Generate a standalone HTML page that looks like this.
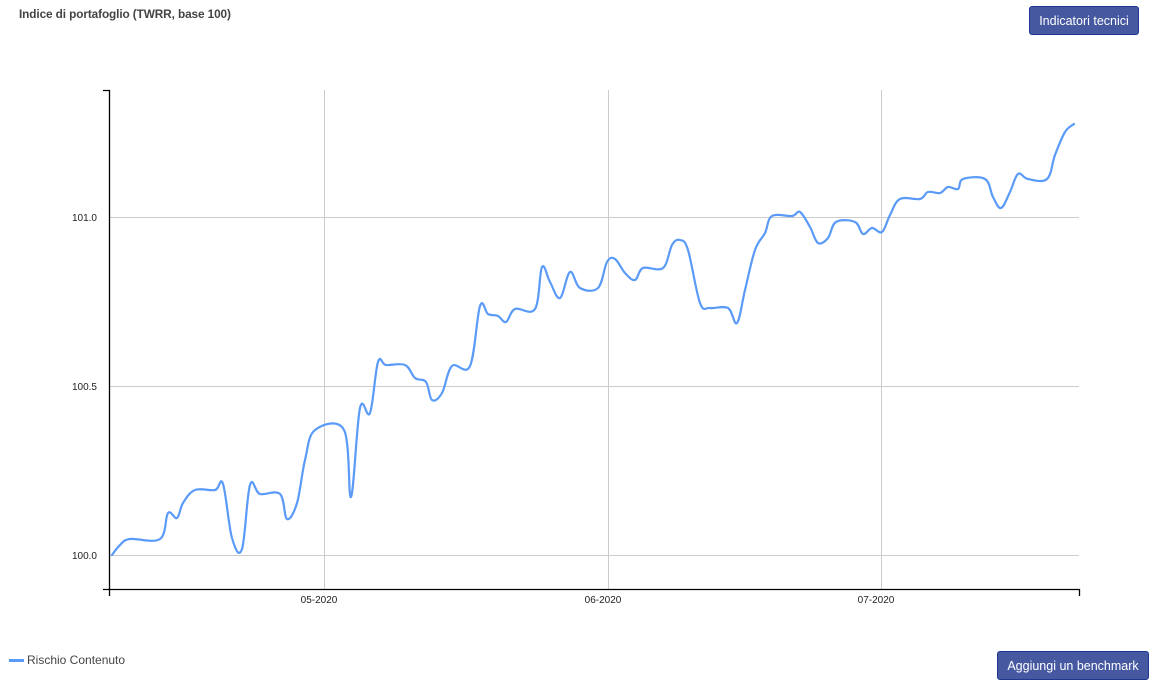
<!DOCTYPE html>
<html><head><meta charset="utf-8"><style>
body{margin:0;width:1154px;height:684px;background:#fff;font-family:"Liberation Sans",Arial,sans-serif;position:relative;overflow:hidden}
.t{position:absolute;left:19px;top:7px;font-size:11.8px;font-weight:bold;color:#444;letter-spacing:-0.1px}
.btn{position:absolute;background:#4558a0;border:1px solid #1f3790;border-radius:3px;color:#fff;font-size:12.5px;display:flex;align-items:center;justify-content:center;box-sizing:border-box}
.lg{position:absolute;left:9px;top:653px;font-size:12px;color:#444}
.lg i{display:inline-block;width:15px;height:3px;background:#5b9bf8;vertical-align:middle;margin-right:3px}
svg{position:absolute;left:0;top:0}
text{font-family:"Liberation Sans",Arial,sans-serif;font-size:10px;fill:#222}
</style></head><body>
<div class="t">Indice di portafoglio (TWRR, base 100)</div>
<div class="btn" style="left:1029px;top:6px;width:110px;height:29px">Indicatori tecnici</div>
<div class="btn" style="left:997px;top:651px;width:152px;height:29px">Aggiungi un benchmark</div>
<div class="lg"><i></i>Rischio Contenuto</div>
<svg width="1154" height="684">
<g stroke="#ccc" stroke-width="1">
<line x1="109" y1="217.5" x2="1079" y2="217.5"/>
<line x1="109" y1="386.5" x2="1079" y2="386.5"/>
<line x1="109" y1="555.5" x2="1079" y2="555.5"/>
<line x1="324.5" y1="90" x2="324.5" y2="589"/>
<line x1="608.5" y1="90" x2="608.5" y2="589"/>
<line x1="881.5" y1="90" x2="881.5" y2="589"/>
</g>
<g stroke="#000" stroke-width="1.3" fill="none">
<path d="M103 90.5H109.5V589"/>
<path d="M103 589.5H1079.5V596"/>
<line x1="109.5" y1="589" x2="109.5" y2="596"/>
</g>
<text x="97" y="221" text-anchor="end">101.0</text>
<text x="97" y="390" text-anchor="end">100.5</text>
<text x="97" y="559" text-anchor="end">100.0</text>
<text x="319" y="603" text-anchor="middle">05-2020</text>
<text x="603" y="603" text-anchor="middle">06-2020</text>
<text x="876" y="603" text-anchor="middle">07-2020</text>
<polyline id="ln" fill="none" stroke="#5b9bf8" stroke-width="2.2" stroke-linejoin="round" stroke-linecap="round" points="112,555 120,545 130,539 160,539 168,513 177,518 183,503 195,490 215,490 223,484 232,538 242,549 250,485 260,494 280,494 287,519 297,503 305,460 315,430 344,430 351,497 360,408 370,413 378,362 386,365 405,365 415,378 426,382 432,400 442,393 452,366 470,366 480,306 488,314 498,316 506,322 515,309 535,309 542,267 550,282 560,298 570,272 580,288 598,288 607,262 615,259 625,273 635,280 643,268 663,268 672,245 680,240 688,250 700,303 710,308 728,308 737,323 745,290 755,250 765,233 772,216 792,216 800,212 810,227 818,243 828,238 836,222 855,222 863,234 872,228 882,232 890,215 900,199 920,199 928,192 940,193 948,187 958,189 963,179 985,179 993,197 1001,208 1010,192 1018,174 1028,179 1047,179 1055,155 1065,132 1074,124"/>
</svg>
<script>
(function(){try{
var pl=document.getElementById('ln');
var p=pl.getAttribute('points').trim().split(/\s+/).map(function(s){return s.split(',').map(Number)});
var d='M'+p[0][0]+' '+p[0][1],t=0.35;
for(var i=0;i<p.length-1;i++){
var p0=p[i-1]||p[i],p1=p[i],p2=p[i+1],p3=p[i+2]||p2;
var c1x=p1[0]+(p2[0]-p0[0])*t/2*1,c1y=p1[1]+(p2[1]-p0[1])*t/2;
var c2x=p2[0]-(p3[0]-p1[0])*t/2,c2y=p2[1]-(p3[1]-p1[1])*t/2;
d+=' C'+c1x+' '+c1y+' '+c2x+' '+c2y+' '+p2[0]+' '+p2[1];}
var ns='http://www.w3.org/2000/svg',path=document.createElementNS(ns,'path');
path.setAttribute('d',d);path.setAttribute('fill','none');path.setAttribute('stroke','#5b9bf8');path.setAttribute('stroke-width','2.2');path.setAttribute('stroke-linecap','round');
pl.parentNode.replaceChild(path,pl);}catch(e){}})();
</script>
</body></html>
